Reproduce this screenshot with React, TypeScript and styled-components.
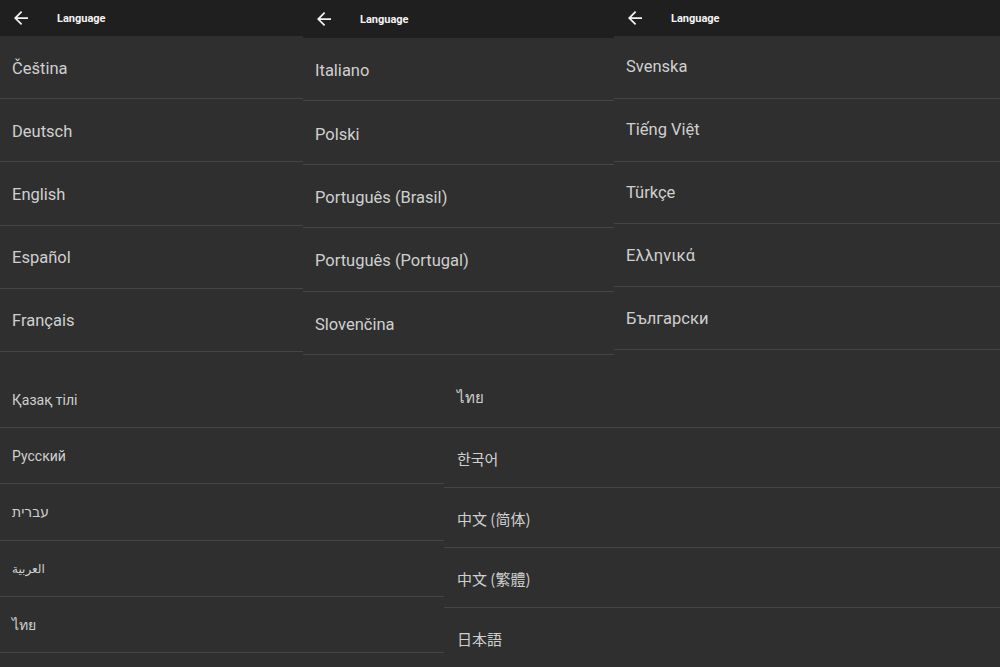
import styled, { createGlobalStyle } from "styled-components";

const GlobalStyle = createGlobalStyle`
  html, body {
    margin: 0;
    padding: 0;
    background: #2f2f2f;
  }
  body {
    font-family: Roboto, "Noto Sans", "DejaVu Sans", sans-serif;
  }
`;

type Screen = {
  width: number;
  header: number;
  rowHeight: number;
  shift: number;
  items: string[];
};

const topScreens: Screen[] = [
  {
    width: 303,
    header: 36,
    rowHeight: 63.2,
    shift: 2,
    items: ["Čeština", "Deutsch", "English", "Español", "Français"],
  },
  {
    width: 311,
    header: 38,
    rowHeight: 63.4,
    shift: 3,
    items: [
      "Italiano",
      "Polski",
      "Português (Brasil)",
      "Português (Portugal)",
      "Slovenčina",
    ],
  },
  {
    width: 386,
    header: 36,
    rowHeight: 62.8,
    shift: 0,
    items: ["Svenska", "Tiếng Việt", "Türkçe", "Ελληνικά", "Български"],
  },
];

const leftItems = ["Қазақ тілі", "Русский", "עברית", "العربية", "ไทย"];

const rightItems: { label: string; font?: string }[] = [
  { label: "ไทย" },
  { label: "한국어", font: '"Noto Sans CJK KR"' },
  { label: "中文 (简体)", font: '"Noto Sans CJK SC"' },
  { label: "中文 (繁體)", font: '"Noto Sans CJK TC"' },
  { label: "日本語", font: '"Noto Sans CJK JP"' },
];

const BackArrow = () => (
  <svg width="14" height="14" viewBox="4 4 16 16" fill="#f2f2f2">
    <path d="M20 11H7.83l5.59-5.59L12 4l-8 8 8 8 1.41-1.41L7.83 13H20v-2z" />
  </svg>
);

const App = () => {
  return (
    <Page>
      <GlobalStyle />
      <TopRow>
        {topScreens.map((s) => (
          <Panel key={s.items[0]} $width={s.width}>
            <Header $height={s.header}>
              <BackArrow />
              <Title>Language</Title>
            </Header>
            {s.items.map((item) => (
              <Row key={item} $height={s.rowHeight} $shift={s.shift}>
                <Label $size={16.5}>{item}</Label>
              </Row>
            ))}
          </Panel>
        ))}
      </TopRow>
      <BottomRow>
        <Panel $width={444} $top={17}>
          {leftItems.map((item) => (
            <Row key={item} $height={56.2} $shift={1}>
              <Label $size={item === "العربية" ? 12 : 14}>{item}</Label>
            </Row>
          ))}
        </Panel>
        <Panel $width={556} $top={13}>
          {rightItems.map((item) => (
            <Row key={item.label} $height={60} $pad={13} $shift={1}>
              <Label $size={15} $font={item.font}>
                {item.label}
              </Label>
            </Row>
          ))}
        </Panel>
      </BottomRow>
    </Page>
  );
};

const Page = styled.div`
  width: 1000px;
  height: 667px;
  overflow: hidden;
  background: #2f2f2f;
  display: flex;
  flex-direction: column;
`;

const TopRow = styled.div`
  display: flex;
  align-items: flex-start;
  height: 355px;
  flex-shrink: 0;
`;

const BottomRow = styled.div`
  display: flex;
  align-items: flex-start;
  flex: 1;
`;

const Panel = styled.div<{ $width: number; $top?: number }>`
  width: ${(p) => p.$width}px;
  flex-shrink: 0;
  display: flex;
  flex-direction: column;
  padding-top: ${(p) => p.$top ?? 0}px;
  background: #2f2f2f;
`;

const Header = styled.div<{ $height: number }>`
  height: ${(p) => p.$height}px;
  background: #1f1f1f;
  display: flex;
  align-items: center;
  padding-left: 14px;
  gap: 29px;
  box-sizing: border-box;
`;

const Title = styled.span`
  color: #f4f4f4;
  font-family: Roboto, sans-serif;
  font-size: 11px;
  font-weight: 700;
`;

const Row = styled.div<{ $height: number; $pad?: number; $shift?: number }>`
  height: ${(p) => p.$height}px;
  box-sizing: border-box;
  display: flex;
  align-items: center;
  padding-left: ${(p) => p.$pad ?? 12}px;
  padding-top: ${(p) => p.$shift ?? 0}px;
  border-bottom: 1px solid #454545;
`;

const Label = styled.span<{ $size: number; $font?: string }>`
  color: #cfcfcf;
  font-size: ${(p) => p.$size}px;
  font-family: ${(p) => (p.$font ? `${p.$font}, ` : "")}Roboto, "Noto Sans",
    "DejaVu Sans", "Noto Sans CJK SC", sans-serif;
  white-space: nowrap;
`;

export default App;
